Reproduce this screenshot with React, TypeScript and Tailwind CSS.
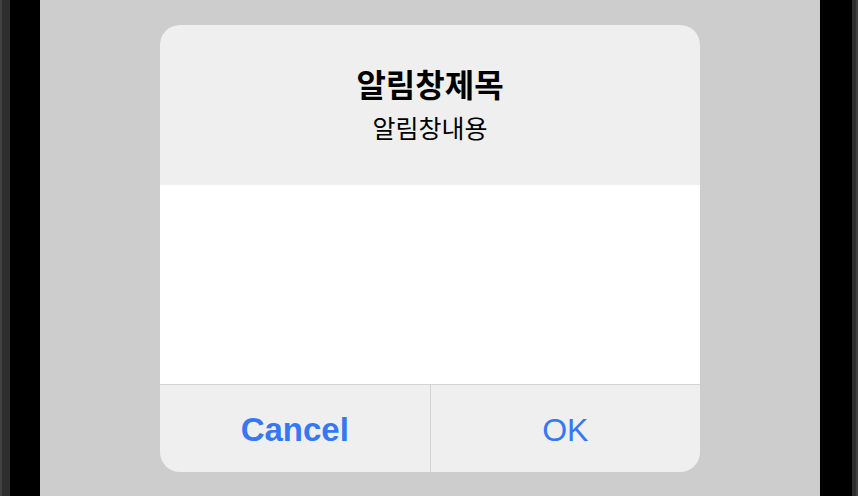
import React from "react";

const Bezel: React.FC<{ side: "left" | "right" }> = ({ side }) => (
  <div className={`flex h-full ${side === "left" ? "flex-row" : "flex-row-reverse"}`}>
    <div className="w-[2px] bg-[#414141]" />
    <div className={`${side === "left" ? "w-[8px]" : "w-[4px]"} bg-[#2e2e2e]`} />
    <div className={`${side === "left" ? "w-[30px]" : "w-[32px]"} bg-black`} />
  </div>
);

const App: React.FC = () => {
  return (
    <div className="flex h-[496px] w-[858px] overflow-hidden">
      <Bezel side="left" />
      <div className="flex flex-1 justify-center bg-[#cdcdcd] pt-[25px]">
        <div className="flex h-[447px] w-[540px] flex-col overflow-hidden rounded-[20px] bg-[#efefef]">
          <div
            className="flex h-[160px] flex-col items-center pt-[38px] text-black"
            style={{ fontFamily: '"Noto Sans CJK KR", "Noto Sans", sans-serif' }}
          >
            <div className="text-[32px] font-bold leading-[40px]">알림창제목</div>
            <div className="mt-[8px] text-[25px] leading-[32px]">알림창내용</div>
          </div>
          <div className="h-[199px] bg-white" />
          <div className="h-px bg-[#d4d4d4]" />
          <div
            className="flex flex-1 pt-[3px] text-[32px] text-[#3478f6]"
            style={{ fontFamily: '"Liberation Sans", Arial, sans-serif' }}
          >
            <button className="flex flex-1 items-center justify-center text-[33px] font-bold">Cancel</button>
            <div className="-mt-[3px] w-px bg-[#d4d4d4]" />
            <button className="flex flex-1 items-center justify-center">OK</button>
          </div>
        </div>
      </div>
      <Bezel side="right" />
    </div>
  );
};

export default App;
